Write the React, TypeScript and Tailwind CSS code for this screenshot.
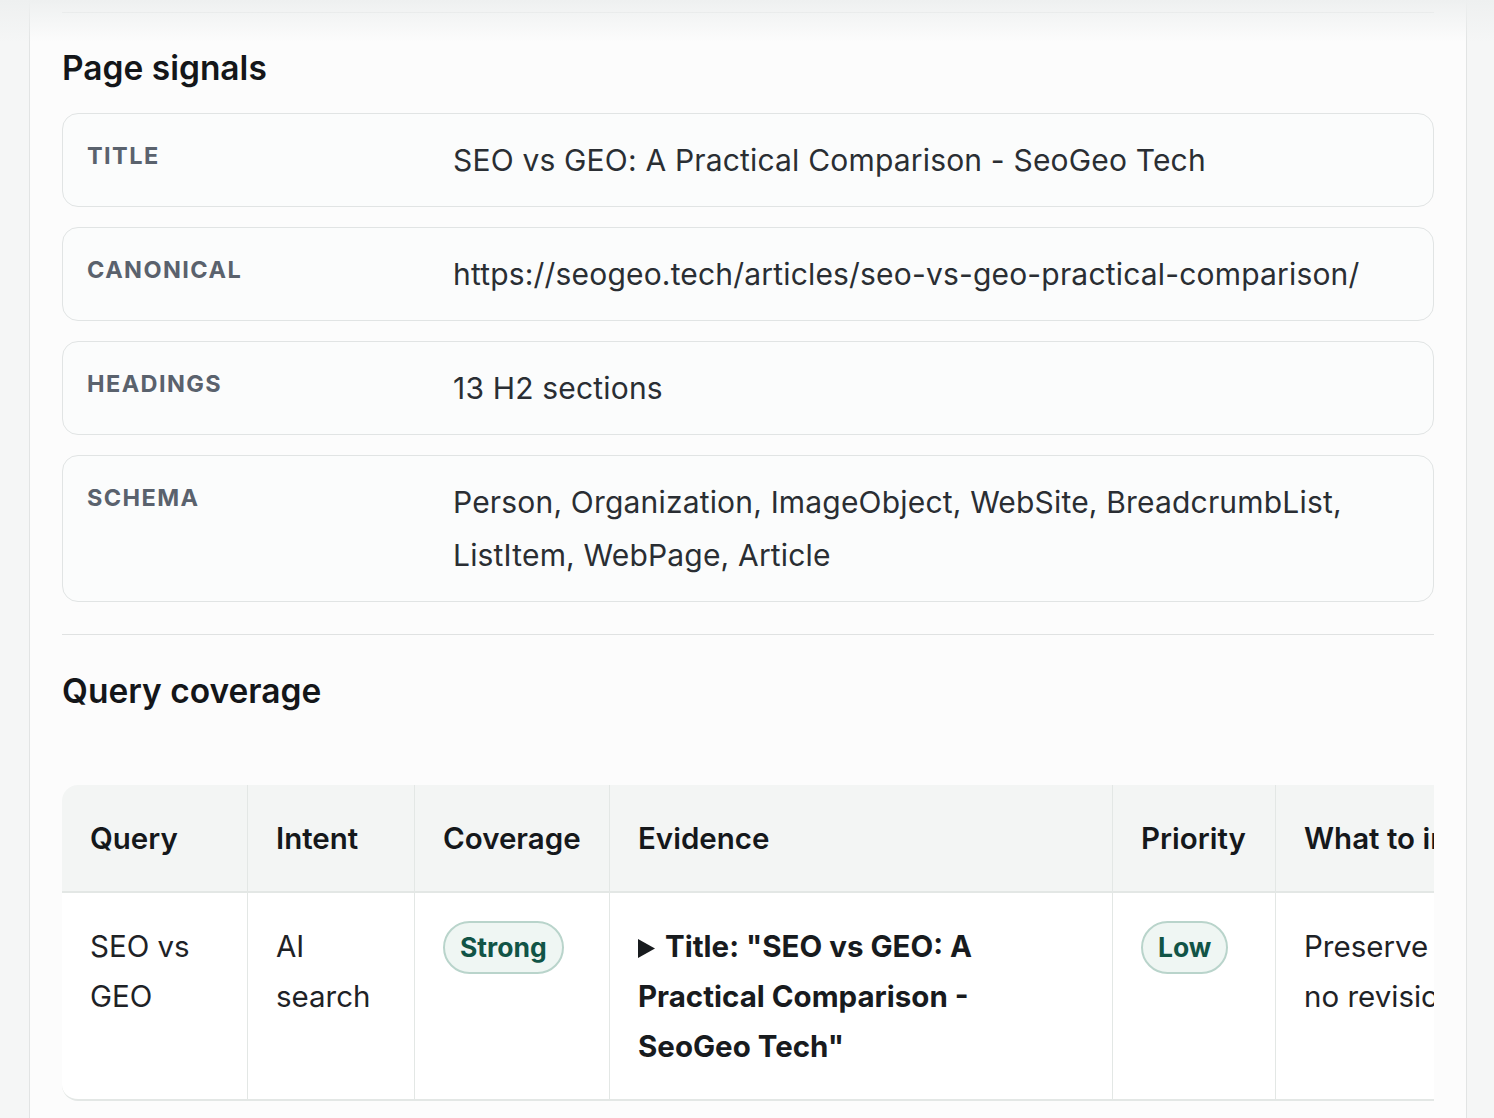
import React from "react";

const signals = [
  { label: "Title", value: "SEO vs GEO: A Practical Comparison - SeoGeo Tech" },
  { label: "Canonical", value: "https://seogeo.tech/articles/seo-vs-geo-practical-comparison/" },
  { label: "Headings", value: "13 H2 sections" },
  {
    label: "Schema",
    value: "Person, Organization, ImageObject, WebSite, BreadcrumbList, ListItem, WebPage, Article",
  },
];

function Badge({ children }: { children: React.ReactNode }) {
  return (
    <span className="inline-block rounded-full border-2 border-[#b9d4cb] bg-[#eff6f3] px-[15px] text-[26.5px] font-bold leading-[49px] text-[#115446]">
      {children}
    </span>
  );
}

export default function App() {
  return (
    <div className="relative min-h-screen bg-[#f5f6f6] font-['Inter',sans-serif]">
      <div className="pointer-events-none absolute inset-x-0 top-0 h-[42px] bg-gradient-to-b from-[#eef0f0] to-transparent" />
      <div className="ml-[29px] min-h-screen w-[1438px] border-x border-[#e2e4e4] bg-[#fcfcfc] px-8 pt-3">
        <hr className="border-t border-[#e0e2e2]" />

        <h2 className="mt-[35px] text-[33.5px] font-semibold leading-10 text-[#141619]">Page signals</h2>

        <div className="mt-[25px] flex flex-col gap-5">
          {signals.map((s) => (
            <div
              key={s.label}
              className="grid grid-cols-[342px_1fr] gap-6 rounded-2xl border border-[#e1e4e4] bg-[#fbfcfc] px-6 pb-[19px] pt-5"
            >
              <div className="text-[23.5px] font-bold uppercase leading-[44px] tracking-[0.06em] text-[#5a626d]">
                {s.label}
              </div>
              <div className="text-[30px] leading-[53px] tracking-[0.006em] text-[#2a2e33]">{s.value}</div>
            </div>
          ))}
        </div>

        <hr className="mt-8 border-t border-[#e0e2e2]" />

        <h2 className="mt-9 text-[33.5px] font-semibold leading-10 text-[#141619]">Query coverage</h2>

        {/* table scrolls sideways in the real page, last column is cut */}
        <div className="mt-[74px] overflow-hidden">
          <table className="w-[1550px] table-fixed border-separate border-spacing-0 text-left text-[29.5px] leading-[50px] text-[#1e2226]">
            <colgroup>
              <col className="w-[186px]" />
              <col className="w-[167px]" />
              <col className="w-[195px]" />
              <col className="w-[503px]" />
              <col className="w-[163px]" />
              <col className="w-[336px]" />
            </colgroup>
            <thead>
              <tr className="bg-[#f3f5f4] text-[#15181b]">
                <th className="rounded-tl-2xl border-b-2 border-r border-[#e3e7e5] px-7 py-7 font-semibold">Query</th>
                <th className="border-b-2 border-r border-[#e3e7e5] px-7 py-7 font-semibold">Intent</th>
                <th className="border-b-2 border-r border-[#e3e7e5] px-7 py-7 font-semibold">Coverage</th>
                <th className="border-b-2 border-r border-[#e3e7e5] px-7 py-7 font-semibold">Evidence</th>
                <th className="border-b-2 border-r border-[#e3e7e5] px-7 py-7 font-semibold">Priority</th>
                <th className="whitespace-nowrap border-b-2 border-[#e3e7e5] px-7 py-7 font-semibold">What to improve</th>
              </tr>
            </thead>
            <tbody className="bg-white align-top">
              <tr>
                <td className="rounded-bl-2xl border-b-2 border-r border-[#e3e7e5] px-7 py-7">SEO vs GEO</td>
                <td className="border-b-2 border-r border-[#e3e7e5] px-7 py-7">AI search</td>
                <td className="border-b-2 border-r border-[#e3e7e5] px-7 py-7">
                  <Badge>Strong</Badge>
                </td>
                <td className="border-b-2 border-r border-[#e3e7e5] px-7 py-7 font-bold text-[#181b1e]">
                  <details>
                    <summary className="cursor-pointer list-none [&::-webkit-details-marker]:hidden">
                      <svg className="mr-[10px] inline-block align-[-1px]" width="17" height="19" viewBox="0 0 17 19">
                        <path d="M0 0 L17 9.5 L0 19 Z" fill="#181b1e" />
                      </svg>
                      Title: "SEO vs GEO: A Practical Comparison - SeoGeo Tech"
                    </summary>
                  </details>
                </td>
                <td className="border-b-2 border-r border-[#e3e7e5] px-7 py-7">
                  <Badge>Low</Badge>
                </td>
                <td className="border-b-2 border-[#e3e7e5] px-7 py-7">Preserve wording; no revision needed.</td>
              </tr>
            </tbody>
          </table>
        </div>
      </div>
    </div>
  );
}
